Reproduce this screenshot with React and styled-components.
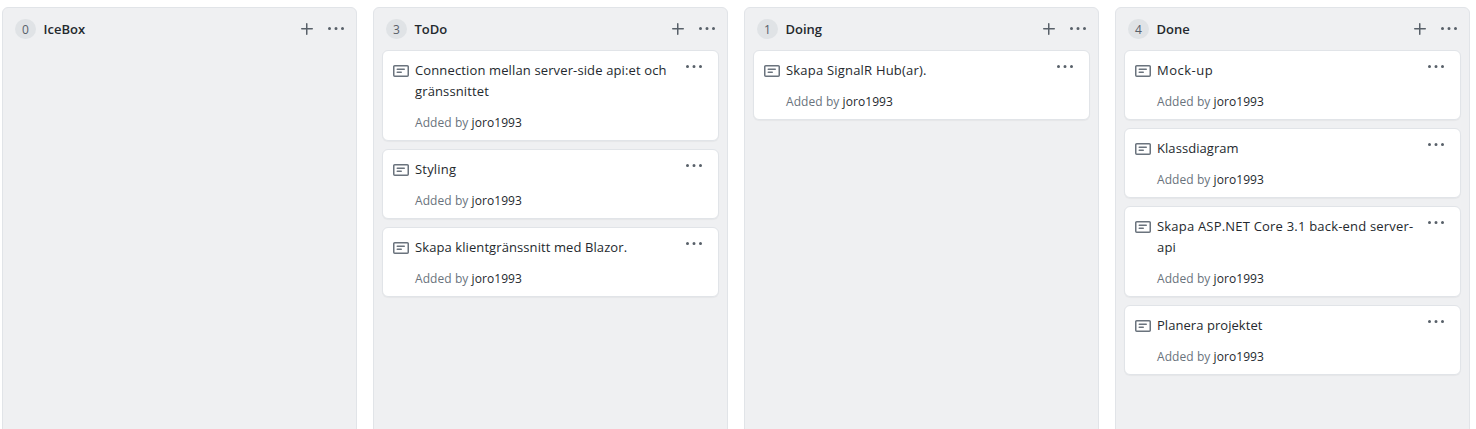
import React from "react";
import styled, { createGlobalStyle } from "styled-components";

const GlobalStyle = createGlobalStyle`
  * { box-sizing: border-box; }
  body {
    margin: 0;
    overflow: hidden;
    background: #fff;
    color: #24292e;
    font-family: "Open Sans", "Noto Sans", sans-serif;
    font-size: 13px;
    font-weight: 370;
    line-height: 21px;
  }
`;

const Board = styled.main`
  display: flex;
  gap: 16px;
  height: 429px;
  padding: 7px 0 0 2px;
  overflow: hidden;
`;

const Column = styled.section`
  flex: 0 0 355px;
  height: 440px;
  padding: 0 8px;
  background: #eff0f2;
  border: 1px solid #e1e4e8;
  border-radius: 6px;
`;

const ColumnHeader = styled.header`
  display: flex;
  align-items: center;
  height: 42px;
  padding: 0 4px;
`;

const Counter = styled.span`
  width: 21px;
  height: 20px;
  margin-right: 7.5px;
  border-radius: 10px;
  background: #e0e3e6;
  color: #586069;
  font-size: 12px;
  line-height: 21px;
  text-align: center;
`;

const ColumnTitle = styled.h3`
  flex: 1;
  margin: 0;
  font-size: 13px;
  font-weight: 600;
  letter-spacing: ${(p) => p.$spacing || 0}px;
`;

const IconButton = styled.button`
  display: flex;
  flex: none;
  width: 16px;
  height: 16px;
  margin: ${(p) => p.$margin || 0};
  padding: 0;
  border: 0;
  background: none;
  color: #586069;
`;

const Icon = styled.svg`
  display: block;
  flex: none;
  width: 16px;
  height: 16px;
  fill: currentColor;
`;

const CardList = styled.div`
  display: flex;
  flex-direction: column;
  gap: 8px;
`;

const Card = styled.article`
  display: flex;
  align-items: flex-start;
  padding: 8px 16px 7px 10px;
  background: #fff;
  border: 1px solid #e1e4e8;
  border-radius: 6px;
  box-shadow: 0 1px 1px rgba(27, 31, 35, 0.04);
`;

const NoteMark = styled.span`
  margin: 4px 6px 0 0;
  color: #6a737d;
`;

const CardBody = styled.div`
  flex: 1;
  padding-top: 1px;
`;

const CardTitle = styled.p`
  margin: 0 0 10px;
  letter-spacing: ${(p) => p.$spacing || 0}px;
  white-space: pre-line;
`;

const Byline = styled.small`
  display: block;
  color: #6a737d;
  font-size: 12px;
  letter-spacing: 0.07px;
`;

const Author = styled.a`
  color: #24292e;
`;

const PlusIcon = () => (
  <Icon viewBox="0 0 16 16">
    <path d="M7.75 2a.75.75 0 01.75.75V7h4.75a.75.75 0 010 1.5H8.5v4.75a.75.75 0 01-1.5 0V8.5H2.75a.75.75 0 010-1.5H7V2.75A.75.75 0 017.75 2z" />
  </Icon>
);

const KebabIcon = () => (
  <Icon viewBox="0 0 16 16">
    <path d="M8 9a1.5 1.5 0 100-3 1.5 1.5 0 000 3zM1.5 9a1.5 1.5 0 100-3 1.5 1.5 0 000 3zm13 0a1.5 1.5 0 100-3 1.5 1.5 0 000 3z" />
  </Icon>
);

const NoteIcon = () => (
  <Icon viewBox="0 0 16 16">
    <path
      fillRule="evenodd"
      d="M0 3.75C0 2.784.784 2 1.75 2h12.5c.966 0 1.75.784 1.75 1.75v8.5A1.75 1.75 0 0114.25 14H1.75A1.75 1.75 0 010 12.25v-8.5zm1.75-.25a.25.25 0 00-.25.25v8.5c0 .138.112.25.25.25h12.5a.25.25 0 00.25-.25v-8.5a.25.25 0 00-.25-.25H1.75zM3.5 6.25a.75.75 0 01.75-.75h7a.75.75 0 010 1.5h-7a.75.75 0 01-.75-.75zm.75 2.25a.75.75 0 000 1.5h4a.75.75 0 000-1.5h-4z"
    />
  </Icon>
);

const columns = [
  { title: "IceBox", cards: [] },
  {
    title: "ToDo",
    cards: [
      { text: "Connection mellan server-side api:et och\ngränssnittet", spacing: 0.13 },
      { text: "Styling", spacing: 0.2 },
      { text: "Skapa klientgränssnitt med Blazor.", spacing: 0.09 },
    ],
  },
  { title: "Doing", cards: [{ text: "Skapa SignalR Hub(ar).", spacing: 0.2 }] },
  {
    title: "Done",
    cards: [
      { text: "Mock-up", spacing: 0.5 },
      { text: "Klassdiagram", spacing: 0.06 },
      { text: "Skapa ASP.NET Core 3.1 back-end server-\napi", spacing: 0.2 },
      { text: "Planera projektet", spacing: 0.05 },
    ],
  },
];

export default function App() {
  return (
    <>
      <GlobalStyle />
      <Board>
        {columns.map((column) => (
          <Column key={column.title}>
            <ColumnHeader>
              <Counter>{column.cards.length}</Counter>
              <ColumnTitle $spacing={column.spacing}>{column.title}</ColumnTitle>
              <IconButton $margin="0 13px 0 0" aria-label="Add a note">
                <PlusIcon />
              </IconButton>
              <IconButton aria-label="Column menu">
                <KebabIcon />
              </IconButton>
            </ColumnHeader>
            <CardList>
              {column.cards.map((card) => (
                <Card key={card.text}>
                  <NoteMark>
                    <NoteIcon />
                  </NoteMark>
                  <CardBody>
                    <CardTitle $spacing={card.spacing}>{card.text}</CardTitle>
                    <Byline>
                      Added by <Author>joro1993</Author>
                    </Byline>
                  </CardBody>
                  <IconButton aria-label="Card menu">
                    <KebabIcon />
                  </IconButton>
                </Card>
              ))}
            </CardList>
          </Column>
        ))}
      </Board>
    </>
  );
}
